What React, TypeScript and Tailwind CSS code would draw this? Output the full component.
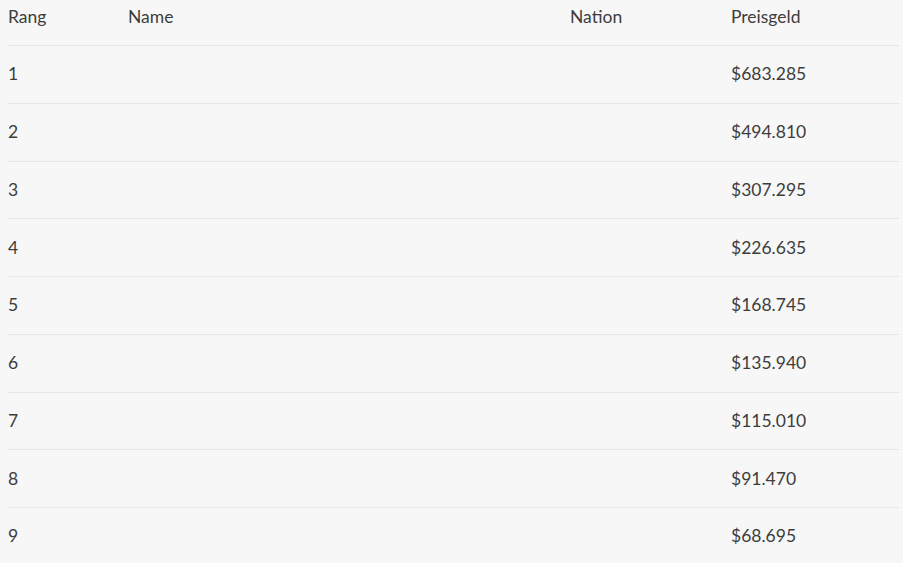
const rows = [
  { rank: 1, prize: "$683.285" },
  { rank: 2, prize: "$494.810" },
  { rank: 3, prize: "$307.295" },
  { rank: 4, prize: "$226.635" },
  { rank: 5, prize: "$168.745" },
  { rank: 6, prize: "$135.940" },
  { rank: 7, prize: "$115.010" },
  { rank: 8, prize: "$91.470" },
  { rank: 9, prize: "$68.695" },
];

const App = () => {
  return (
    <div className="min-h-[563px] bg-[#f7f7f7] pl-2 pr-1 text-[17.5px] text-[#3d3d3d] font-['Lato','Liberation_Sans',sans-serif] overflow-hidden">
      <div className="grid grid-cols-[120px_442px_161px_1fr] h-[46px] pt-[5px] leading-6 border-b border-[#e6e6e6]">
        <div>Rang</div>
        <div>Name</div>
        <div>Nation</div>
        <div>Preisgeld</div>
      </div>
      {rows.map((row) => (
        <div
          key={row.rank}
          className="grid grid-cols-[120px_442px_161px_1fr] items-center h-[57.75px] leading-6 border-b border-[#e6e6e6]"
        >
          <div>{row.rank}</div>
          <div></div>
          <div></div>
          <div>{row.prize}</div>
        </div>
      ))}
    </div>
  );
};

export default App;
